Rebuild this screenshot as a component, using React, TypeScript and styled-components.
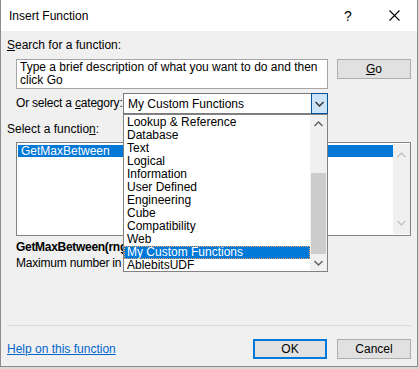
import React from "react"
import styled, { createGlobalStyle } from "styled-components"

const Global = createGlobalStyle`
  html, body {
    margin: 0;
    padding: 0;
    background: #d9d9d9;
  }
  body {
    font-family: "Liberation Sans", Arial, sans-serif;
    font-size: 12px;
    color: #000;
  }
`

const Window = styled.div`
  width: 418px;
  height: 367px;
  box-sizing: border-box;
  border: 1px solid #8c8c8c;
  border-top: none;
  background: #f0f0f0;
  display: flex;
  flex-direction: column;
`

const TitleBar = styled.div`
  height: 31px;
  flex-shrink: 0;
  background: #fff;
  display: flex;
  align-items: center;
  padding-left: 8px;
`

const Title = styled.div`
  flex: 1;
  font-size: 12px;
`

const TitleButton = styled.div`
  width: 46px;
  height: 31px;
  display: flex;
  align-items: center;
  justify-content: center;
  font-size: 14px;
`

const Body = styled.div`
  flex: 1;
  display: flex;
  flex-direction: column;
  padding: 7px 6px 7px 6px;
`

const Label = styled.div<{ $top?: number }>`
  height: 15px;
  line-height: 15px;
  margin-top: ${(p) => p.$top ?? 0}px;
  white-space: nowrap;
`

const Row = styled.div<{ $top: number }>`
  display: flex;
  align-items: flex-start;
  margin-top: ${(p) => p.$top}px;
`

const SearchBox = styled.div`
  margin-left: 9px;
  width: 312px;
  height: 30px;
  box-sizing: border-box;
  background: #fff;
  border: 1px solid #a5a5a5;
  padding: 1px 3px;
  line-height: 13px;
`

const Button = styled.div<{ $default?: boolean }>`
  width: 74px;
  height: 20px;
  box-sizing: border-box;
  background: #e1e1e1;
  border: ${(p) => (p.$default ? "2px solid #0078d7" : "1px solid #adadad")};
  display: flex;
  align-items: center;
  justify-content: center;
`

const GoButton = styled(Button)`
  margin-left: 9px;
`

const CategoryRow = styled.div`
  display: flex;
  align-items: center;
  margin-top: 4px;
  height: 21px;
`

const CategoryLabel = styled.div`
  width: 116px;
  padding-left: 9px;
  box-sizing: border-box;
  line-height: 15px;
  letter-spacing: -0.2px;
  white-space: nowrap;
`

const Combo = styled.div`
  position: relative;
  width: 205px;
  height: 21px;
  box-sizing: border-box;
  border: 1px solid #7a7a7a;
  background: #fff;
  display: flex;
  align-items: center;
`

const ComboText = styled.div`
  flex: 1;
  padding-left: 4px;
`

const ComboArrow = styled.div`
  width: 17px;
  height: 21px;
  margin: -1px -1px -1px 0;
  box-sizing: border-box;
  background: #cce4f7;
  border: 1px solid #005499;
  display: flex;
  align-items: center;
  justify-content: center;
`

const DropList = styled.div`
  position: absolute;
  left: -1px;
  top: 20px;
  width: 205px;
  height: 158px;
  box-sizing: border-box;
  border: 1px solid #828282;
  background: #fff;
  display: flex;
  z-index: 2;
`

const DropItems = styled.div`
  flex: 1;
  padding-top: 1px;
`

const DropItem = styled.div<{ $selected?: boolean }>`
  height: 13px;
  line-height: 13px;
  padding-left: 3px;
  white-space: nowrap;
  background: ${(p) => (p.$selected ? "#0078d7" : "transparent")};
  color: ${(p) => (p.$selected ? "#fff" : "#000")};
  outline: ${(p) => (p.$selected ? "1px dotted #f0a060" : "none")};
  outline-offset: -1px;
`

const ScrollBar = styled.div`
  width: 17px;
  background: #f0f0f0;
  display: flex;
  flex-direction: column;
`

const ScrollArrow = styled.div<{ $h?: number }>`
  height: ${(p) => p.$h ?? 17}px;
  display: flex;
  align-items: center;
  justify-content: center;
`

const ScrollTrack = styled.div`
  flex: 1;
  display: flex;
  flex-direction: column;
  justify-content: flex-end;
  padding: 0 1px;
`

const Thumb = styled.div<{ $h: number }>`
  height: ${(p) => p.$h}px;
  background: #cdcdcd;
`

const FunctionList = styled.div`
  margin: 5px 0 0 9px;
  height: 94px;
  box-sizing: border-box;
  border: 1px solid #828282;
  background: #fff;
  display: flex;
  padding: 1px 0 1px 1px;
`

const FunctionItems = styled.div`
  flex: 1;
`

const FunctionItem = styled.div`
  height: 12px;
  line-height: 12px;
  padding-left: 3px;
  margin-top: 1px;
  background: #0078d7;
  color: #fff;
`

/* only the part left of the open drop-down shows */
const Signature = styled.div`
  margin-top: 4px;
  padding-left: 9px;
  line-height: 15px;
  font-weight: bold;
  letter-spacing: -0.3px;
  white-space: nowrap;
`

const Description = styled.div`
  margin-top: 1px;
  padding-left: 9px;
  line-height: 15px;
  letter-spacing: -0.2px;
  white-space: nowrap;
`

const Spacer = styled.div`
  flex: 1;
`

const Separator = styled.div`
  height: 1px;
  background: #dadada;
  margin-bottom: 13px;
`

const Footer = styled.div`
  display: flex;
  align-items: center;
  gap: 10px;
`

const HelpLink = styled.a`
  flex: 1;
  color: #0066cc;
  text-decoration: underline;
  line-height: 15px;
`

const Chevron = ({ up, color }: { up?: boolean; color: string }) => (
  <svg width="9" height="6" viewBox="0 0 9 6">
    <path
      d={up ? "M0.5 5 L4.5 1 L8.5 5" : "M0.5 1 L4.5 5 L8.5 1"}
      fill="none"
      stroke={color}
      strokeWidth="1.4"
    />
  </svg>
)

const categories = [
  "Lookup & Reference",
  "Database",
  "Text",
  "Logical",
  "Information",
  "User Defined",
  "Engineering",
  "Cube",
  "Compatibility",
  "Web",
  "My Custom Functions",
  "AblebitsUDF",
]

export default function App() {
  return (
    <>
      <Global />
      <Window>
        <TitleBar>
          <Title>Insert Function</Title>
          <TitleButton>?</TitleButton>
          <TitleButton>
            <svg width="11" height="11" viewBox="0 0 11 11">
              <path d="M0.5 0.5 L10.5 10.5 M10.5 0.5 L0.5 10.5" stroke="#000" strokeWidth="1.1" />
            </svg>
          </TitleButton>
        </TitleBar>
        <Body>
          <Label>
            <u>S</u>earch for a function:
          </Label>
          <Row $top={6}>
            <SearchBox>
              Type a brief description of what you want to do and then
              <br />
              click Go
            </SearchBox>
            <GoButton>
              <span>
                <u>G</u>o
              </span>
            </GoButton>
          </Row>
          <CategoryRow>
            <CategoryLabel>
              Or select a <u>c</u>ategory:
            </CategoryLabel>
            <Combo>
              <ComboText>My Custom Functions</ComboText>
              <ComboArrow>
                <Chevron color="#333" />
              </ComboArrow>
              <DropList>
                <DropItems>
                  {categories.map((c) => (
                    <DropItem key={c} $selected={c === "My Custom Functions"}>
                      {c}
                    </DropItem>
                  ))}
                </DropItems>
                <ScrollBar>
                  <ScrollArrow>
                    <Chevron up color="#606060" />
                  </ScrollArrow>
                  <ScrollTrack>
                    <Thumb $h={81} />
                  </ScrollTrack>
                  <ScrollArrow>
                    <Chevron color="#606060" />
                  </ScrollArrow>
                </ScrollBar>
              </DropList>
            </Combo>
          </CategoryRow>
          <Label $top={8}>
            Select a functio<u>n</u>:
          </Label>
          <FunctionList>
            <FunctionItems>
              <FunctionItem>GetMaxBetween</FunctionItem>
            </FunctionItems>
            <ScrollBar>
              <ScrollArrow $h={22}>
                <Chevron up color="#c4c4c4" />
              </ScrollArrow>
              <Spacer />
              <ScrollArrow $h={22}>
                <Chevron color="#c4c4c4" />
              </ScrollArrow>
            </ScrollBar>
          </FunctionList>
          <Signature>GetMaxBetween(rng</Signature>
          <Description>Maximum number in</Description>
          <Spacer />
          <Separator />
          <Footer>
            <HelpLink>Help on this function</HelpLink>
            <Button $default>OK</Button>
            <Button>Cancel</Button>
          </Footer>
        </Body>
      </Window>
    </>
  )
}
